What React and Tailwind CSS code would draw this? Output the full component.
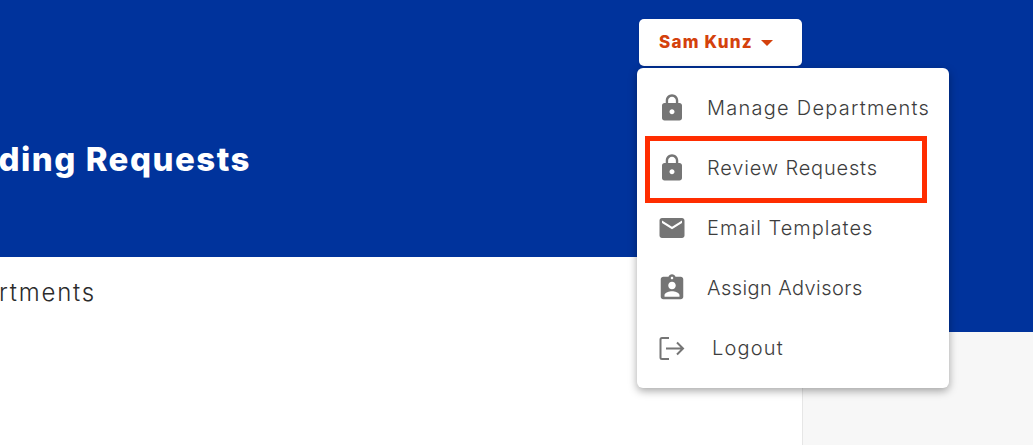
import React from "react";

function Icon({ d }) {
  return (
    <svg viewBox="0 0 24 24" className="w-[30px] h-[30px] shrink-0 fill-[#757575]">
      <path d={d} />
    </svg>
  );
}

const lock = "M18 8h-1V6c0-2.76-2.24-5-5-5S7 3.24 7 6v2H6c-1.1 0-2 .9-2 2v10c0 1.1.9 2 2 2h12c1.1 0 2-.9 2-2V10c0-1.1-.9-2-2-2zm-6 9c-1.1 0-2-.9-2-2s.9-2 2-2 2 .9 2 2-.9 2-2 2zm3.1-9H8.9V6c0-1.71 1.39-3.1 3.1-3.1 1.71 0 3.1 1.39 3.1 3.1v2z";
const email = "M20 4H4c-1.1 0-1.99.9-1.99 2L2 18c0 1.1.9 2 2 2h16c1.1 0 2-.9 2-2V6c0-1.1-.9-2-2-2zm0 4l-8 5-8-5V6l8 5 8-5v2z";
const assign = "M19 3h-4.18C14.4 1.84 13.3 1 12 1c-1.3 0-2.4.84-2.82 2H5c-1.1 0-2 .9-2 2v14c0 1.1.9 2 2 2h14c1.1 0 2-.9 2-2V5c0-1.1-.9-2-2-2zm-7 0c.55 0 1 .45 1 1s-.45 1-1 1-1-.45-1-1 .45-1 1-1zm0 4c1.66 0 3 1.34 3 3s-1.34 3-3 3-3-1.34-3-3 1.34-3 3-3zm6 12H6v-1.4c0-2 4-3.1 6-3.1s6 1.1 6 3.1V19z";

function Row({ icon, label, textClass }) {
  return (
    <div className="h-[60px] flex items-center pl-5">
      {icon}
      <span className={`text-[20px] font-light text-[#3d3d3d] whitespace-nowrap ${textClass}`}>{label}</span>
    </div>
  );
}

export default function App() {
  return (
    <div className="relative w-[1033px] h-[445px] overflow-hidden bg-white font-['Inter',sans-serif] grid grid-cols-[803px_230px]">
      <div className="flex flex-col border-r border-[#e6e6e6]">
        <div className="h-[257px] bg-[#00339c] flex flex-col items-end shrink-0 -mr-px pr-px">
          <button className="mt-[19px] w-[163px] h-[47px] pt-px bg-white rounded-[5px] flex items-center pl-5 gap-2 text-[17px] tracking-[1.2px] font-extrabold text-[#d4410c] shadow-sm">
            Sam Kunz
            <span className="w-0 h-0 border-x-[6.5px] border-x-transparent border-t-[6px] border-t-[#d4410c]" />
          </button>
          <div className="self-start w-[251px] mt-[71px] flex justify-end overflow-hidden">
            <h1 className="text-[33px] leading-[44px] tracking-[1.5px] font-extrabold text-white whitespace-nowrap">Funding Requests</h1>
          </div>
        </div>
        <div className="w-[96px] flex justify-end overflow-hidden mt-5">
          <span className="text-[24px] leading-[32px] tracking-[1.8px] font-light text-[#2b2b2b] whitespace-nowrap">Departments</span>
        </div>
      </div>
      <div className="flex flex-col bg-[#f7f7f7]">
        <div className="h-[332px] bg-[#00339c]" />
      </div>

      <div className="absolute left-[637px] top-[68px] w-[312px] h-[320px] py-2.5 bg-white rounded-[6px] shadow-[0_3px_8px_rgba(0,0,0,0.35)]">
        <Row icon={<Icon d={lock} />} label="Manage Departments" textClass="ml-5 tracking-[1.25px]" />
        <Row icon={<Icon d={lock} />} label="Review Requests" textClass="ml-5 tracking-[0.83px]" />
        <Row icon={<Icon d={email} />} label="Email Templates" textClass="ml-5 tracking-[1.03px]" />
        <Row icon={<Icon d={assign} />} label="Assign Advisors" textClass="ml-5 tracking-[0.43px]" />
        <Row
          icon={
            <svg viewBox="0 0 30 30" className="w-[30px] h-[30px] shrink-0 fill-none stroke-[#757575] stroke-2">
              <path d="M12 5H5a1.5 1.5 0 0 0-1.5 1.5v18A1.5 1.5 0 0 0 5 26h7" />
              <path d="M9 15.5h17M20 9.5l6 6-6 6" />
            </svg>
          }
          label="Logout"
          textClass="ml-[25px] tracking-[1.2px]"
        />
      </div>

      <div className="absolute left-[645px] top-[136px] w-[282px] h-[67px] border-[5px] border-[#ff2d00]" />
    </div>
  );
}
